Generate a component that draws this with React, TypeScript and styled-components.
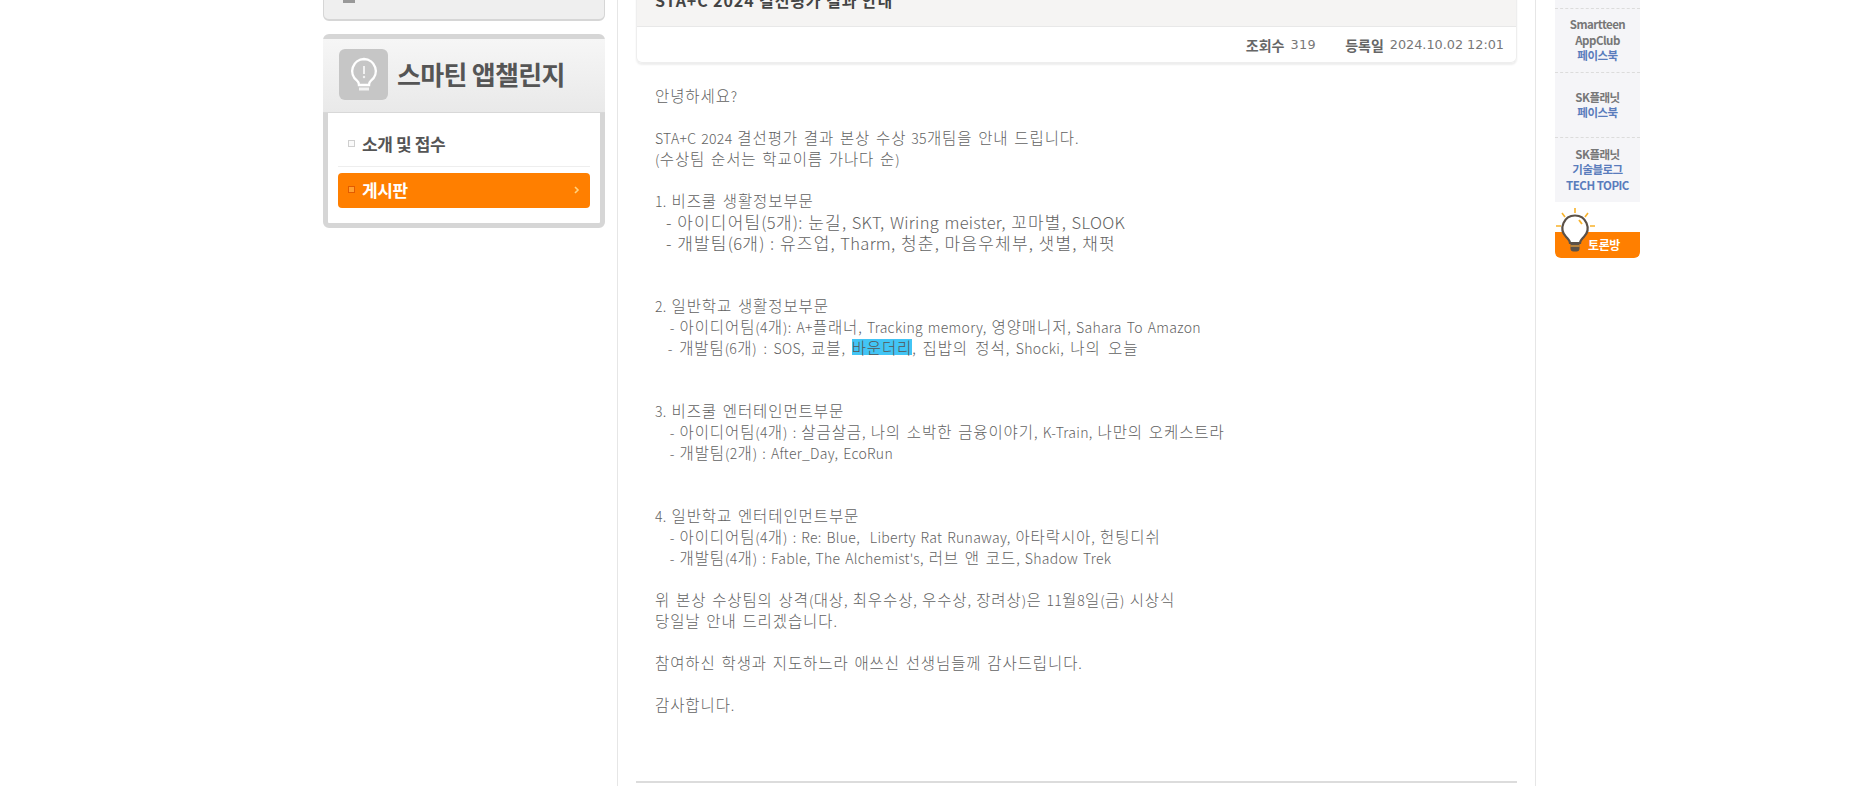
import React from "react";
import styled, { createGlobalStyle } from "styled-components";

const Global = createGlobalStyle`
  html, body { margin: 0; padding: 0; background: #fff; overflow: hidden; height: 786px; }
  body { font-family: "Noto Sans CJK KR", "Liberation Sans", sans-serif; }
`;

const Page = styled.div`
  display: flex;
  align-items: flex-start;
  width: 1318px;
  height: 836px;
  margin: -50px 0 0 323px;
`;

const LeftColumn = styled.aside`
  width: 282px;
  flex: none;
  display: flex;
  flex-direction: column;
  gap: 13px;
`;

const ClippedBox = styled.div`
  height: 71px;
  box-sizing: border-box;
  background: #efefef;
  border: 1px solid #d6d6d6;
  border-bottom-width: 2px;
  border-radius: 0 0 6px 6px;
  padding: 46px 0 0 19px;
`;

const ClippedMark = styled.div`
  width: 12px;
  height: 6px;
  background: #999;
`;

const MenuBox = styled.nav`
  box-sizing: border-box;
  height: 194px;
  border: 5px solid #d6d6d6;
  border-radius: 6px;
  background: #fff;
  display: flex;
  flex-direction: column;
`;

const MenuHeader = styled.header`
  height: 74px;
  flex: none;
  box-sizing: border-box;
  margin: 0 -5px;
  padding: 10px 0 0 16px;
  background: linear-gradient(#f6f6f6, #e9e9e9);
  border-bottom: 1px solid #d8d8d8;
  display: flex;
  align-items: flex-start;
  gap: 9px;
`;

const BulbTile = styled.div`
  width: 49px;
  height: 51px;
  border-radius: 6px;
  background: #c6c6c6;
  display: flex;
  align-items: center;
  justify-content: center;
`;

const MenuTitle = styled.h2`
  margin: 0;
  font-size: 26px;
  line-height: 49px;
  font-weight: 700;
  letter-spacing: -0.7px;
  color: #555;
`;

const MenuList = styled.ul`
  list-style: none;
  margin: 0;
  padding: 0 10px;
  display: flex;
  flex-direction: column;
`;

const MenuItem = styled.li<{ $active?: boolean }>`
  height: ${(p) => (p.$active ? "35px" : "54px")};
  box-sizing: border-box;
  display: flex;
  align-items: center;
  padding: ${(p) => (p.$active ? "0 10px 2px" : "8px 10px 0")};
  gap: 7px;
  font-size: 17px;
  font-weight: 700;
  letter-spacing: -0.4px;
  border-radius: ${(p) => (p.$active ? "4px" : "0")};
  background: ${(p) => (p.$active ? "#ff7f00" : "transparent")};
  color: ${(p) => (p.$active ? "#fff" : "#555")};
  border-bottom: ${(p) => (p.$active ? "none" : "1px solid #eee")};
  margin-bottom: ${(p) => (p.$active ? "0" : "6px")};
`;

const ItemBullet = styled.span<{ $active?: boolean }>`
  width: 7px;
  height: 7px;
  flex: none;
  box-sizing: border-box;
  border: 1px solid ${(p) => (p.$active ? "#e25b00" : "#cfcfcf")};
  background: ${(p) => (p.$active ? "#ffa030" : "#fafafa")};
`;

const Chevron = styled.svg`
  margin-left: auto;
  flex: none;
`;

const Main = styled.main`
  width: 919px;
  height: 836px;
  flex: none;
  margin-left: 12px;
  box-sizing: border-box;
  border-left: 1px solid #e6e6e6;
  border-right: 1px solid #e6e6e6;
  padding: 0 18px;
  display: flex;
  flex-direction: column;
`;

const Card = styled.section`
  border: 1px solid #eee;
  border-top: none;
  border-radius: 0 0 6px 6px;
  box-shadow: 0 2px 2px #eeeeee;
`;

const TitleBar = styled.div`
  height: 77px;
  box-sizing: border-box;
  background: #f5f4f3;
  border-bottom: 1px solid #e8e8e8;
  padding: 40px 0 0 18px;
`;

const Title = styled.h1`
  margin: 0;
  font-size: 16px;
  line-height: 20px;
  font-weight: 700;
  letter-spacing: 0.9px;
  color: #444;
`;

const Meta = styled.div`
  height: 35px;
  display: flex;
  align-items: center;
  justify-content: flex-end;
  padding-right: 12px;
  font-size: 14px;
  color: #777;
`;

const MetaLabel = styled.b`
  font-weight: 700;
  color: #666;
  margin-left: 29px;
`;

const MetaValue = styled.span`
  font-family: "DejaVu Sans", sans-serif;
  font-size: 12.8px;
  margin-left: 6px;
  color: #777;
`;

const ViewCount = styled(MetaValue)`
  letter-spacing: 0.4px;
`;

const Body = styled.div`
  padding: 22px 0 0 19px;
  height: 718px;
  box-sizing: border-box;
  font-size: 14px;
  line-height: 21px;
  letter-spacing: 0.3px;
  word-spacing: 1.5px;
  color: #626262;
  font-weight: 300;
`;

const Line = styled.p<{ $big?: boolean; $wide?: boolean }>`
  margin: 0;
  height: 21px;
  white-space: pre;
  font-size: ${(p) => (p.$big ? "16.5px" : "14px")};
  word-spacing: ${(p) => (p.$wide ? "3px" : "1.5px")};
`;

const Hangul = styled.span<{ $big?: boolean }>`
  font-size: ${(p) => (p.$big ? "17px" : "15.5px")};
  letter-spacing: ${(p) => (p.$big ? "1.2px" : "0.9px")};
`;

const Mark = styled.mark`
  display: inline-block;
  height: 16px;
  line-height: 16px;
  background: #42c5f5;
  color: #555;
`;

const FooterRule = styled.hr`
  margin: 0;
  border: none;
  height: 2px;
  background: #dcdcdc;
`;

const RightColumn = styled.aside`
  width: 85px;
  flex: none;
  margin-left: 19px;
  display: flex;
  flex-direction: column;
`;

const Banner = styled.div<{ $h: number }>`
  height: ${(p) => p.$h}px;
  box-sizing: border-box;
  background: #f5f5f8;
  border-bottom: 1px dashed #dcdcdc;
  display: flex;
  flex-direction: column;
  align-items: center;
  justify-content: center;
  text-align: center;
  font-size: 11.5px;
  line-height: 15.5px;
  font-weight: 700;
  letter-spacing: -0.5px;
  color: #777;
  &:last-of-type { border-bottom: none; }
`;

const BannerBlue = styled.span`
  color: #5a7cbc;
`;

const TalkLink = styled.section`
  position: relative;
  height: 50px;
  margin-top: 6px;
  display: flex;
  flex-direction: column;
  justify-content: flex-end;
`;

const TalkBar = styled.div`
  height: 26px;
  background: #ff7f00;
  border-radius: 0 0 6px 6px;
  color: #fff;
  font-size: 12px;
  font-weight: 700;
  letter-spacing: -0.4px;
  line-height: 26px;
  padding-left: 33px;
`;

const TalkBulb = styled.svg`
  position: absolute;
  left: 0;
  top: 0;
`;

function Mixed({ text, big }: { text: string; big?: boolean }) {
  const parts = text.split(/([\uAC00-\uD7A3]+(?: [\uAC00-\uD7A3]+)*)/);
  return (
    <>
      {parts.map((part, i) =>
        i % 2 === 1 ? (
          <Hangul key={i} $big={big}>{part}</Hangul>
        ) : (
          <React.Fragment key={i}>{part}</React.Fragment>
        ),
      )}
    </>
  );
}

const lines: { text: string; big?: boolean; mark?: [string, string, string] }[] = [
  { text: "안녕하세요?" },
  { text: "" },
  { text: "STA+C 2024 결선평가 결과 본상 수상 35개팀을 안내 드립니다." },
  { text: "(수상팀 순서는 학교이름 가나다 순)" },
  { text: "" },
  { text: "1. 비즈쿨 생활정보부문" },
  { text: "  - 아이디어팀(5개): 눈길, SKT, Wiring meister, 꼬마별, SLOOK", big: true },
  { text: "  - 개발팀(6개) : 유즈업, Tharm, 청춘, 마음우체부, 샛별, 채펏", big: true },
  { text: "" },
  { text: "" },
  { text: "2. 일반학교 생활정보부문" },
  { text: "   - 아이디어팀(4개): A+플래너, Tracking memory, 영양매니저, Sahara To Amazon" },
  { text: "", mark: ["  - 개발팀(6개) : SOS, 쿄블, ", "바운더리", ", 집밥의 정석, Shocki, 나의 오늘"] },
  { text: "" },
  { text: "" },
  { text: "3. 비즈쿨 엔터테인먼트부문" },
  { text: "   - 아이디어팀(4개) : 살금살금, 나의 소박한 금융이야기, K-Train, 나만의 오케스트라" },
  { text: "   - 개발팀(2개) : After_Day, EcoRun" },
  { text: "" },
  { text: "" },
  { text: "4. 일반학교 엔터테인먼트부문" },
  { text: "   - 아이디어팀(4개) : Re: Blue,  Liberty Rat Runaway, 아타락시아, 헌팅디쉬" },
  { text: "   - 개발팀(4개) : Fable, The Alchemist's, 러브 앤 코드, Shadow Trek" },
  { text: "" },
  { text: "위 본상 수상팀의 상격(대상, 최우수상, 우수상, 장려상)은 11월8일(금) 시상식" },
  { text: "당일날 안내 드리겠습니다." },
  { text: "" },
  { text: "참여하신 학생과 지도하느라 애쓰신 선생님들께 감사드립니다." },
  { text: "" },
  { text: "감사합니다." },
];

export default function App() {
  return (
    <>
      <Global />
      <Page>
        <LeftColumn>
          <ClippedBox><ClippedMark /></ClippedBox>
          <MenuBox>
            <MenuHeader>
              <BulbTile>
                <svg width="28" height="36" viewBox="0 0 28 36" fill="none">
                  <path d="M14 2a12 12 0 0 0-7 21.6c1.5 1.2 2 2.4 2 4.4h10c0-2 .5-3.2 2-4.4A12 12 0 0 0 14 2z" stroke="#fff" strokeWidth="2.4" />
                  <path d="M14 9v8" stroke="#f2f2f2" strokeWidth="2" />
                  <circle cx="14" cy="20" r="1.2" fill="#f2f2f2" />
                  <path d="M9 32h10" stroke="#f2f2f2" strokeWidth="3" />
                </svg>
              </BulbTile>
              <MenuTitle>스마틴 앱챌린지</MenuTitle>
            </MenuHeader>
            <MenuList>
              <MenuItem><ItemBullet />소개 및 접수</MenuItem>
              <MenuItem $active>
                <ItemBullet $active />게시판
                <Chevron width="6" height="8" viewBox="0 0 6 8" fill="none">
                  <path d="M1 1l3 3-3 3" stroke="#ffd27f" strokeWidth="1.6" />
                </Chevron>
              </MenuItem>
            </MenuList>
          </MenuBox>
        </LeftColumn>

        <Main>
          <Card>
            <TitleBar>
              <Title>STA+C 2024 결선평가 결과 안내</Title>
            </TitleBar>
            <Meta>
              <MetaLabel>조회수</MetaLabel><ViewCount>319</ViewCount>
              <MetaLabel>등록일</MetaLabel><MetaValue>2024.10.02 12:01</MetaValue>
            </Meta>
          </Card>
          <Body>
            {lines.map((l, i) => (
              <Line key={i} $big={l.big} $wide={!!l.mark}>
                {l.mark ? (
                  <>
                    <Mixed text={l.mark[0]} />
                    <Mark><Mixed text={l.mark[1]} /></Mark>
                    <Mixed text={l.mark[2]} />
                  </>
                ) : (
                  <Mixed text={l.text} big={l.big} />
                )}
              </Line>
            ))}
          </Body>
          <FooterRule />
        </Main>

        <RightColumn>
          <Banner $h={59} />
          <Banner $h={64}>
            <span>Smartteen</span>
            <span>AppClub</span>
            <BannerBlue>페이스북</BannerBlue>
          </Banner>
          <Banner $h={65}>
            <span>SK플래닛</span>
            <BannerBlue>페이스북</BannerBlue>
          </Banner>
          <Banner $h={64}>
            <span>SK플래닛</span>
            <BannerBlue>기술블로그</BannerBlue>
            <BannerBlue>TECH TOPIC</BannerBlue>
          </Banner>
          <TalkLink>
            <TalkBar>토론방</TalkBar>
            <TalkBulb width="40" height="46" viewBox="0 0 40 46" fill="none">
              <path d="M20 0v5M7 5l3 4M33 5l-3 4M1 18h5M35 18h5" stroke="#f9b32a" strokeWidth="1.6" />
              <path d="M20 7.5a12.5 12.5 0 0 0-9 21.2c2 2.2 4 3.8 4 6.3h10c0-2.5 2-4.1 4-6.3A12.5 12.5 0 0 0 20 7.5z" fill="#fff" stroke="#5b5148" strokeWidth="2.2" />
              <path d="M24 12l3 4" stroke="#f9b32a" strokeWidth="1.8" />
              <path d="M15.5 35h9v5.5a3 3 0 0 1-3 3h-3a3 3 0 0 1-3-3z" fill="#5b5148" />
              <path d="M15.5 38h9" stroke="#f2a53a" strokeWidth="1.2" />
            </TalkBulb>
          </TalkLink>
        </RightColumn>
      </Page>
    </>
  );
}
